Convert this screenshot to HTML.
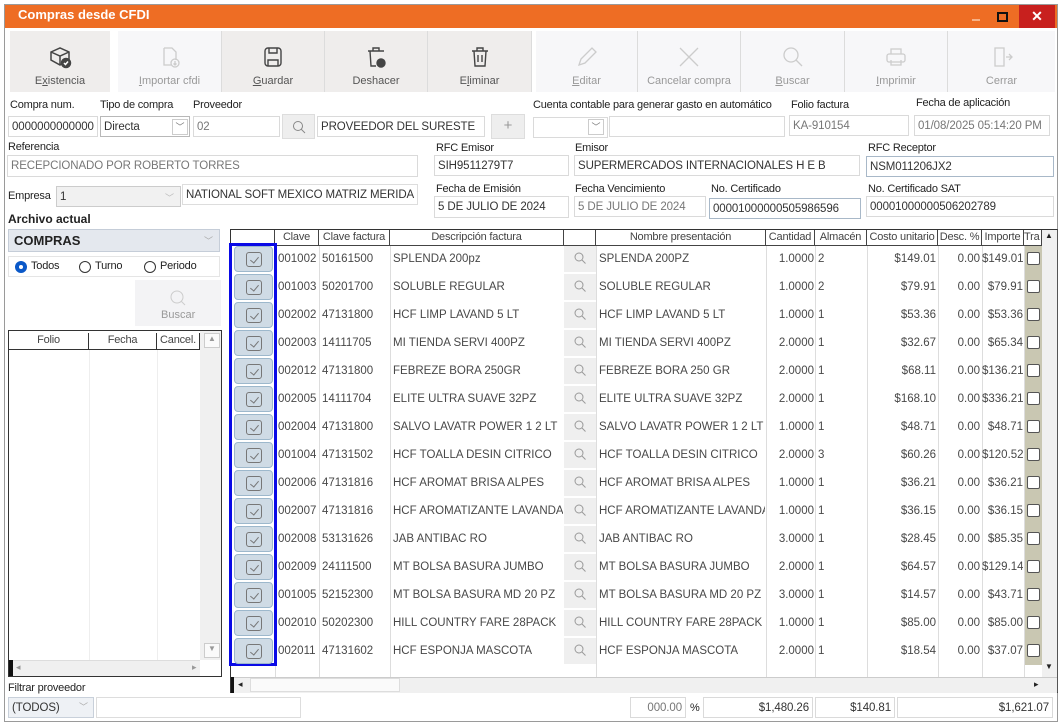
<!DOCTYPE html>
<html><head><meta charset="utf-8">
<style>
*{box-sizing:border-box;margin:0;padding:0}
body{width:1062px;height:723px;background:#fff;font-family:"Liberation Sans",sans-serif;font-size:11px;color:#222;position:relative;overflow:hidden}
.a{position:absolute}
.lbl{position:absolute;font-size:11px;color:#222;white-space:nowrap;letter-spacing:-0.2px}
.in{position:absolute;background:#fff;border:1px solid #dadada;height:21px;padding:4px 0 0 3px;font-size:11.5px;white-space:nowrap;overflow:hidden;letter-spacing:-0.1px;color:#333}
.g{color:#777}
.tb{position:absolute;top:31px;height:61px;background:#efedec;border-right:1px solid #dcdcdc;text-align:center}
.tb.d{background:#f7f7f9;color:#999}
.tb span{position:absolute;left:0;right:0;top:44px;font-size:11px;color:#555}
.tb.d span{color:#999}
.tb svg{position:absolute;left:50%;top:14px;margin-left:-12px}
.th{position:absolute;top:230px;height:16px;border-right:1px solid #444;font-size:11px;text-align:center;padding-top:1px;color:#444;white-space:nowrap;overflow:hidden;letter-spacing:-0.2px}
.vl{position:absolute;top:246px;height:431px;border-left:1px solid #ddd}
.r{position:absolute;left:276px;width:766px;height:28px;font-size:11.5px;color:#484848;white-space:nowrap}
.r div{position:absolute;top:7px;overflow:hidden}
.cb{position:absolute;left:234px;width:39px;height:26px;background:#cfdbe5;border:1px solid #9db8cc;border-radius:4px}
.cb i{position:absolute;left:11px;top:5px;width:16px;height:15px;border:1px solid #777;border-radius:3px}
.cb i:after{content:"";position:absolute;left:5px;top:2px;width:4px;height:7px;border:solid #777;border-width:0 1px 1px 0;transform:rotate(40deg)}
.sq{position:absolute;left:1027px;width:13px;height:13px;border:1px solid #555;border-radius:2px;background:#fff}
.sc{position:absolute;left:564px;width:32px;height:27px;background:#efefef;border-bottom:1px solid #fff}
</style></head><body>
<div class="a" style="left:4px;top:4px;width:1054px;height:718px;border:1px solid #9a9a9a;background:#fff"></div>
<div class="a" style="left:5px;top:5px;width:1052px;height:23px;background:#ee6d24"></div>
<div class="a" style="left:18px;top:7px;color:#fff;font-weight:bold;font-size:13px">Compras desde CFDI</div>
<div class="a" style="left:972px;top:19px;width:8px;height:2px;background:#f7b186"></div>
<div class="a" style="left:997px;top:12px;width:11px;height:10px;border:2px solid #111"></div>
<div class="a" style="left:1019px;top:5px;width:36px;height:23px;background:#c8201e;color:#fff;font-weight:bold;font-size:14px;text-align:center;padding-top:3px">✕</div>

<div class="tb" style="left:10px;width:100px;background:#efedec;border-right:0"><svg width="24" height="24" viewBox="0 0 24 24" fill="none" stroke="#444" stroke-width="1.5"><path d="M3 7l9-4 9 4v8l-9 5-9-5z M3 7l9 4 9-4 M12 11v9"/><circle cx="18" cy="18" r="4.5" fill="#444"/><path d="M16 18l1.5 1.5 2.5-3" stroke="#fff"/></svg><span>E<u>x</u>istencia</span></div>
<div class="tb d" style="left:118px;width:104px"><svg width="24" height="24" viewBox="0 0 24 24" fill="none" stroke="#ccc" stroke-width="1.3"><path d="M6 3h8l4 4v8 M6 3v17h7"/><circle cx="17" cy="18" r="4"/><path d="M17 16v4M15.5 18.5l1.5 1.5 1.5-1.5"/></svg><span><u>I</u>mportar cfdi</span></div>
<div class="tb" style="left:222px;width:103px"><svg width="24" height="24" viewBox="0 0 24 24" fill="none" stroke="#444" stroke-width="1.4"><rect x="4" y="3" width="16" height="18" rx="3"/><path d="M8 3v5h8V3 M7 21v-6h10v6"/></svg><span><u>G</u>uardar</span></div>
<div class="tb" style="left:325px;width:103px"><svg width="24" height="24" viewBox="0 0 24 24" fill="none" stroke="#444" stroke-width="1.4"><path d="M4 6h16M9 6V3h6v3M6 6l1 15h5"/><circle cx="17" cy="18" r="4" fill="#444"/></svg><span>Deshacer</span></div>
<div class="tb" style="left:428px;width:104px"><svg width="24" height="24" viewBox="0 0 24 24" fill="none" stroke="#444" stroke-width="1.4"><path d="M4 6h16M9 6V3h6v3M6 6l1 15h10l1-15M10 10v7M14 10v7"/></svg><span>E<u>l</u>iminar</span></div>
<div class="tb d" style="left:536px;width:102px"><svg width="24" height="24" viewBox="0 0 24 24" fill="none" stroke="#ccc" stroke-width="1.3"><path d="M4 20l2-6L17 3l4 4-11 11z"/></svg><span><u>E</u>ditar</span></div>
<div class="tb d" style="left:638px;width:103px"><svg width="24" height="24" viewBox="0 0 24 24" fill="none" stroke="#ccc" stroke-width="1.3"><path d="M3 3l18 18M21 3L3 21"/></svg><span>Cancelar compra</span></div>
<div class="tb d" style="left:741px;width:104px"><svg width="24" height="24" viewBox="0 0 24 24" fill="none" stroke="#ccc" stroke-width="1.3"><circle cx="10" cy="10" r="7"/><path d="M15 15l6 6"/></svg><span><u>B</u>uscar</span></div>
<div class="tb d" style="left:845px;width:103px"><svg width="24" height="24" viewBox="0 0 24 24" fill="none" stroke="#ccc" stroke-width="1.3"><rect x="3" y="9" width="18" height="8" rx="2"/><path d="M7 9V4h10v5M7 15v5h10v-5"/></svg><span><u>I</u>mprimir</span></div>
<div class="tb d" style="left:948px;width:107px;border-right:0"><svg width="24" height="24" viewBox="0 0 24 24" fill="none" stroke="#ccc" stroke-width="1.3"><path d="M5 3h9v18H5z M16 12h6M19 9l3 3-3 3"/></svg><span>Cerrar</span></div>

<div class="lbl" style="left:10px;top:99px">Compra num.</div>
<div class="lbl" style="left:100px;top:99px">Tipo de compra</div>
<div class="lbl" style="left:193px;top:99px">Proveedor</div>
<div class="in" style="left:8px;top:116px;width:90px">0000000000000</div>
<div class="in" style="left:100px;top:116px;width:90px;border-color:#b8b8b8">Directa</div>
<div class="a" style="left:172px;top:119px;width:16px;height:16px;border:1px solid #ccc;color:#777;font-size:9px;text-align:center;line-height:14px">﹀</div>
<div class="in g" style="left:193px;top:116px;width:87px">02</div>
<div class="a" style="left:282px;top:114px;width:33px;height:25px;background:#eee;border:1px solid #ddd"><svg width="33" height="25"><circle cx="15" cy="11" r="4.5" fill="none" stroke="#888"/><path d="M18 14l4 4" stroke="#888"/></svg></div>
<div class="in" style="left:317px;top:116px;width:168px">PROVEEDOR DEL SURESTE</div>
<div class="a" style="left:491px;top:114px;width:34px;height:25px;background:#eee;border:1px solid #ddd;color:#999;text-align:center;font-size:15px;line-height:22px">+</div>
<div class="lbl" style="left:533px;top:99px">Cuenta contable para generar gasto en automático</div>
<div class="lbl" style="left:791px;top:99px">Folio factura</div>
<div class="lbl" style="left:916px;top:97px">Fecha de aplicación</div>
<div class="in" style="left:533px;top:117px;width:75px;height:21px"></div>
<div class="a" style="left:588px;top:119px;width:16px;height:16px;border:1px solid #ccc;color:#777;font-size:9px;text-align:center;line-height:14px">﹀</div>
<div class="in" style="left:609px;top:116px;width:176px"></div>
<div class="in g" style="left:789px;top:115px;width:120px">KA-910154</div>
<div class="in g" style="left:914px;top:115px;width:136px">01/08/2025 05:14:20 PM</div>

<div class="lbl" style="left:8px;top:141px">Referencia</div>
<div class="in g" style="left:7px;top:155px;width:411px;height:22px">RECEPCIONADO POR ROBERTO TORRES</div>
<div class="lbl" style="left:436px;top:142px">RFC Emisor</div>
<div class="in" style="left:434px;top:155px;width:135px">SIH9511279T7</div>
<div class="lbl" style="left:575px;top:142px">Emisor</div>
<div class="in" style="left:574px;top:155px;width:286px">SUPERMERCADOS INTERNACIONALES H E B</div>
<div class="lbl" style="left:868px;top:142px">RFC Receptor</div>
<div class="in" style="left:866px;top:156px;width:188px;border-color:#a8b8c8">NSM011206JX2</div>

<div class="lbl" style="left:8px;top:190px">Empresa</div>
<div class="in" style="left:56px;top:186px;width:125px;background:#f1f1f1;border-color:#ccc">1</div>
<div class="a" style="left:165px;top:191px;color:#bbb;font-size:9px">﹀</div>
<div class="in" style="left:182px;top:184px;width:236px;border-color:#ddd">NATIONAL SOFT MEXICO MATRIZ MERIDA</div>
<div class="lbl" style="left:436px;top:183px">Fecha de Emisión</div>
<div class="in" style="left:434px;top:196px;width:135px;height:22px">5 DE JULIO DE 2024</div>
<div class="lbl" style="left:575px;top:183px">Fecha Vencimiento</div>
<div class="in g" style="left:574px;top:196px;width:132px">5 DE JULIO DE 2024</div>
<div class="lbl" style="left:711px;top:183px">No. Certificado</div>
<div class="in" style="left:709px;top:198px;width:152px;border-color:#a8b8c8">00001000000505986596</div>
<div class="lbl" style="left:868px;top:183px">No. Certificado SAT</div>
<div class="in" style="left:866px;top:196px;width:188px">00001000000506202789</div>

<div class="a" style="left:8px;top:212px;font-weight:bold;font-size:12px">Archivo actual</div>
<div class="a" style="left:8px;top:229px;width:212px;height:23px;background:#e4e8ee;border:1px solid #c5cdd8;font-weight:bold;font-size:13px;padding:3px 0 0 5px">COMPRAS</div>
<div class="a" style="left:204px;top:234px;color:#aaa;font-size:9px">﹀</div>
<div class="a" style="left:8px;top:256px;width:212px;height:21px;border:1px solid #e5e5e5"></div>
<div class="a" style="left:15px;top:261px;width:12px;height:12px;border-radius:50%;background:#0a58c8"></div>
<div class="a" style="left:19px;top:265px;width:4px;height:4px;border-radius:50%;background:#fff"></div>
<div class="lbl" style="left:31px;top:260px">Todos</div>
<div class="a" style="left:79px;top:261px;width:12px;height:12px;border-radius:50%;border:1px solid #333"></div>
<div class="lbl" style="left:95px;top:260px">Turno</div>
<div class="a" style="left:144px;top:261px;width:12px;height:12px;border-radius:50%;border:1px solid #333"></div>
<div class="lbl" style="left:160px;top:260px">Periodo</div>
<div class="a" style="left:135px;top:280px;width:86px;height:46px;background:#f3f3f5"><svg width="86" height="46"><circle cx="42" cy="17" r="6" fill="none" stroke="#ccc"/><path d="M46 21l4 4" stroke="#ccc"/></svg><div class="a" style="left:26px;top:29px;color:#999">Buscar</div></div>
<div class="a" style="left:8px;top:330px;width:214px;height:347px;border:1px solid #333"></div>
<div class="a" style="left:9px;top:331px;width:191px;height:19px;border-bottom:1px solid #333"></div>
<div class="th" style="left:9px;top:333px;width:80px;border-color:#333">Folio</div>
<div class="th" style="left:89px;top:333px;width:68px;border-color:#333">Fecha</div>
<div class="th" style="left:157px;top:333px;width:43px;border-color:#333">Cancel.</div>
<div class="a" style="left:89px;top:350px;height:310px;border-left:1px solid #eee"></div>
<div class="a" style="left:157px;top:350px;height:310px;border-left:1px solid #eee"></div>
<div class="a" style="left:200px;top:331px;width:21px;height:329px;background:#f0f0f0"></div>
<div class="a" style="left:204px;top:333px;width:16px;height:15px;border:1px solid #ccc;color:#999;font-size:8px;text-align:center;background:#fafafa">▲</div>
<div class="a" style="left:204px;top:643px;width:16px;height:15px;border:1px solid #ccc;color:#999;font-size:8px;text-align:center;background:#fafafa">▼</div>
<div class="a" style="left:9px;top:660px;width:191px;height:16px;background:#f0f0f0;border-top:1px solid #ddd"></div>
<div class="a" style="left:9px;top:660px;width:4px;height:16px;background:#111"></div>
<div class="a" style="left:16px;top:662px;color:#999;font-size:9px">◂</div>
<div class="a" style="left:192px;top:662px;color:#999;font-size:9px">▸</div>

<div class="a" style="left:230px;top:229px;width:828px;height:464px;border:1px solid #333;border-right:1px solid #555"></div>
<div class="a" style="left:231px;top:230px;width:811px;height:16px;border-bottom:1px solid #444"></div>
<div class="th" style="left:231px;width:44px"></div>
<div class="th" style="left:275px;width:44px">Clave</div>
<div class="th" style="left:319px;width:71px">Clave factura</div>
<div class="th" style="left:390px;width:174px">Descripción factura</div>
<div class="th" style="left:564px;width:32px"></div>
<div class="th" style="left:596px;width:170px">Nombre presentación</div>
<div class="th" style="left:766px;width:49px">Cantidad</div>
<div class="th" style="left:815px;width:52px">Almacén</div>
<div class="th" style="left:867px;width:71px">Costo unitario</div>
<div class="th" style="left:938px;width:44px">Desc. %</div>
<div class="th" style="left:982px;width:42px">Importe</div>
<div class="th" style="left:1024px;width:18px;text-align:left">Tra</div>
<div class="vl" style="left:275px"></div><div class="vl" style="left:319px"></div><div class="vl" style="left:390px"></div><div class="vl" style="left:596px"></div><div class="vl" style="left:766px"></div><div class="vl" style="left:815px"></div><div class="vl" style="left:867px"></div><div class="vl" style="left:938px"></div><div class="vl" style="left:982px"></div><div class="vl" style="left:1024px"></div>
<div class="a" style="left:1025px;top:246px;width:17px;height:419px;background:#c9c7b2"></div>
<div class="a" style="left:1042px;top:230px;width:15px;height:447px;background:#f0f0f0"></div>
<div class="a" style="left:1045px;top:231px;font-size:8px">▲</div>
<div class="a" style="left:1045px;top:662px;font-size:8px">▼</div>
<div class="a" style="left:231px;top:677px;width:826px;height:16px;background:#f0f0f0;border-top:1px solid #ccc"></div>
<div class="a" style="left:231px;top:677px;width:3px;height:16px;background:#111"></div>
<div class="a" style="left:238px;top:679px;font-size:9px">◂</div>
<div class="a" style="left:250px;top:678px;width:150px;height:14px;background:#fafafa;border:1px solid #ddd"></div>
<div class="a" style="left:1034px;top:679px;font-size:9px">▸</div>

<div class="sc" style="top:246px"></div><div class="sc" style="top:274px"></div><div class="sc" style="top:302px"></div><div class="sc" style="top:330px"></div><div class="sc" style="top:358px"></div><div class="sc" style="top:386px"></div><div class="sc" style="top:414px"></div><div class="sc" style="top:442px"></div><div class="sc" style="top:470px"></div><div class="sc" style="top:498px"></div><div class="sc" style="top:526px"></div><div class="sc" style="top:554px"></div><div class="sc" style="top:582px"></div><div class="sc" style="top:610px"></div><div class="sc" style="top:638px"></div>

<div class="a" style="left:229px;top:243px;width:48px;height:423px;border:3px solid #0a0ae6"></div>
<div class="cb" style="top:246px"><i></i></div><div class="cb" style="top:274px"><i></i></div><div class="cb" style="top:302px"><i></i></div><div class="cb" style="top:330px"><i></i></div><div class="cb" style="top:358px"><i></i></div><div class="cb" style="top:386px"><i></i></div><div class="cb" style="top:414px"><i></i></div><div class="cb" style="top:442px"><i></i></div><div class="cb" style="top:470px"><i></i></div><div class="cb" style="top:498px"><i></i></div><div class="cb" style="top:526px"><i></i></div><div class="cb" style="top:554px"><i></i></div><div class="cb" style="top:582px"><i></i></div><div class="cb" style="top:610px"><i></i></div><div class="cb" style="top:638px"><i></i></div>

<div class="sq" style="top:252px"></div><div class="sq" style="top:280px"></div><div class="sq" style="top:308px"></div><div class="sq" style="top:336px"></div><div class="sq" style="top:364px"></div><div class="sq" style="top:392px"></div><div class="sq" style="top:420px"></div><div class="sq" style="top:448px"></div><div class="sq" style="top:476px"></div><div class="sq" style="top:504px"></div><div class="sq" style="top:532px"></div><div class="sq" style="top:560px"></div><div class="sq" style="top:588px"></div><div class="sq" style="top:616px"></div><div class="sq" style="top:644px"></div>

<svg class="a" style="left:564px;top:246px" width="32" height="420" fill="none" stroke="#999" stroke-width="1">
<g id="m"><circle cx="15" cy="11" r="4"/><path d="M18 14l3.5 3.5"/></g>
<use href="#m" y="28"/><use href="#m" y="56"/><use href="#m" y="84"/><use href="#m" y="112"/><use href="#m" y="140"/><use href="#m" y="168"/><use href="#m" y="196"/><use href="#m" y="224"/><use href="#m" y="252"/><use href="#m" y="280"/><use href="#m" y="308"/><use href="#m" y="336"/><use href="#m" y="364"/><use href="#m" y="392"/>
</svg>

<style>
.c1{left:2px}.c2{left:46px}.c3{left:117px;width:170px}.c4{left:323px;width:166px}.c5{left:490px;width:48px;text-align:right}.c6{left:542px}.c7{left:590px;width:70px;text-align:right}.c8{left:662px;width:42px;text-align:right}.c9{left:706px;width:41px;text-align:right}
</style>
<div class="r" style="top:246px"><div class="c1">001002</div><div class="c2">50161500</div><div class="c3">SPLENDA 200pz</div><div class="c4">SPLENDA 200PZ</div><div class="c5">1.0000</div><div class="c6">2</div><div class="c7">$149.01</div><div class="c8">0.00</div><div class="c9">$149.01</div></div>
<div class="r" style="top:274px"><div class="c1">001003</div><div class="c2">50201700</div><div class="c3">SOLUBLE REGULAR</div><div class="c4">SOLUBLE REGULAR</div><div class="c5">1.0000</div><div class="c6">2</div><div class="c7">$79.91</div><div class="c8">0.00</div><div class="c9">$79.91</div></div>
<div class="r" style="top:302px"><div class="c1">002002</div><div class="c2">47131800</div><div class="c3">HCF LIMP LAVAND 5 LT</div><div class="c4">HCF LIMP LAVAND 5 LT</div><div class="c5">1.0000</div><div class="c6">1</div><div class="c7">$53.36</div><div class="c8">0.00</div><div class="c9">$53.36</div></div>
<div class="r" style="top:330px"><div class="c1">002003</div><div class="c2">14111705</div><div class="c3">MI TIENDA SERVI 400PZ</div><div class="c4">MI TIENDA SERVI 400PZ</div><div class="c5">2.0000</div><div class="c6">1</div><div class="c7">$32.67</div><div class="c8">0.00</div><div class="c9">$65.34</div></div>
<div class="r" style="top:358px"><div class="c1">002012</div><div class="c2">47131800</div><div class="c3">FEBREZE BORA 250GR</div><div class="c4">FEBREZE BORA 250 GR</div><div class="c5">2.0000</div><div class="c6">1</div><div class="c7">$68.11</div><div class="c8">0.00</div><div class="c9">$136.21</div></div>
<div class="r" style="top:386px"><div class="c1">002005</div><div class="c2">14111704</div><div class="c3">ELITE ULTRA SUAVE 32PZ</div><div class="c4">ELITE ULTRA SUAVE 32PZ</div><div class="c5">2.0000</div><div class="c6">1</div><div class="c7">$168.10</div><div class="c8">0.00</div><div class="c9">$336.21</div></div>
<div class="r" style="top:414px"><div class="c1">002004</div><div class="c2">47131800</div><div class="c3">SALVO LAVATR POWER 1 2 LT</div><div class="c4">SALVO LAVATR POWER 1 2 LT</div><div class="c5">1.0000</div><div class="c6">1</div><div class="c7">$48.71</div><div class="c8">0.00</div><div class="c9">$48.71</div></div>
<div class="r" style="top:442px"><div class="c1">001004</div><div class="c2">47131502</div><div class="c3">HCF TOALLA DESIN CITRICO</div><div class="c4">HCF TOALLA DESIN CITRICO</div><div class="c5">2.0000</div><div class="c6">3</div><div class="c7">$60.26</div><div class="c8">0.00</div><div class="c9">$120.52</div></div>
<div class="r" style="top:470px"><div class="c1">002006</div><div class="c2">47131816</div><div class="c3">HCF AROMAT BRISA ALPES</div><div class="c4">HCF AROMAT BRISA ALPES</div><div class="c5">1.0000</div><div class="c6">1</div><div class="c7">$36.21</div><div class="c8">0.00</div><div class="c9">$36.21</div></div>
<div class="r" style="top:498px"><div class="c1">002007</div><div class="c2">47131816</div><div class="c3">HCF AROMATIZANTE LAVANDA</div><div class="c4">HCF AROMATIZANTE LAVANDA</div><div class="c5">1.0000</div><div class="c6">1</div><div class="c7">$36.15</div><div class="c8">0.00</div><div class="c9">$36.15</div></div>
<div class="r" style="top:526px"><div class="c1">002008</div><div class="c2">53131626</div><div class="c3">JAB ANTIBAC RO</div><div class="c4">JAB ANTIBAC RO</div><div class="c5">3.0000</div><div class="c6">1</div><div class="c7">$28.45</div><div class="c8">0.00</div><div class="c9">$85.35</div></div>
<div class="r" style="top:554px"><div class="c1">002009</div><div class="c2">24111500</div><div class="c3">MT BOLSA BASURA JUMBO</div><div class="c4">MT BOLSA BASURA JUMBO</div><div class="c5">2.0000</div><div class="c6">1</div><div class="c7">$64.57</div><div class="c8">0.00</div><div class="c9">$129.14</div></div>
<div class="r" style="top:582px"><div class="c1">001005</div><div class="c2">52152300</div><div class="c3">MT BOLSA BASURA MD 20 PZ</div><div class="c4">MT BOLSA BASURA MD 20 PZ</div><div class="c5">3.0000</div><div class="c6">1</div><div class="c7">$14.57</div><div class="c8">0.00</div><div class="c9">$43.71</div></div>
<div class="r" style="top:610px"><div class="c1">002010</div><div class="c2">50202300</div><div class="c3">HILL COUNTRY FARE 28PACK</div><div class="c4">HILL COUNTRY FARE 28PACK</div><div class="c5">1.0000</div><div class="c6">1</div><div class="c7">$85.00</div><div class="c8">0.00</div><div class="c9">$85.00</div></div>
<div class="r" style="top:638px"><div class="c1">002011</div><div class="c2">47131602</div><div class="c3">HCF ESPONJA MASCOTA</div><div class="c4">HCF ESPONJA MASCOTA</div><div class="c5">2.0000</div><div class="c6">1</div><div class="c7">$18.54</div><div class="c8">0.00</div><div class="c9">$37.07</div></div>

<div class="lbl" style="left:8px;top:682px">Filtrar proveedor</div>
<div class="in" style="left:8px;top:697px;width:86px;background:#eef1f5;border-color:#c8d0da">(TODOS)</div>
<div class="a" style="left:79px;top:700px;color:#aaa;font-size:9px">﹀</div>
<div class="a" style="left:96px;top:697px;width:205px;height:21px;border:1px solid #ddd"></div>
<div class="in g" style="left:630px;top:697px;width:56px;text-align:right;padding-right:3px">000.00</div>
<div class="lbl" style="left:690px;top:702px">%</div>
<div class="in" style="left:703px;top:697px;width:110px;text-align:right;padding-right:3px">$1,480.26</div>
<div class="in" style="left:815px;top:697px;width:80px;text-align:right;padding-right:3px">$140.81</div>
<div class="in" style="left:897px;top:697px;width:156px;text-align:right;padding-right:3px">$1,621.07</div>
</body></html>
